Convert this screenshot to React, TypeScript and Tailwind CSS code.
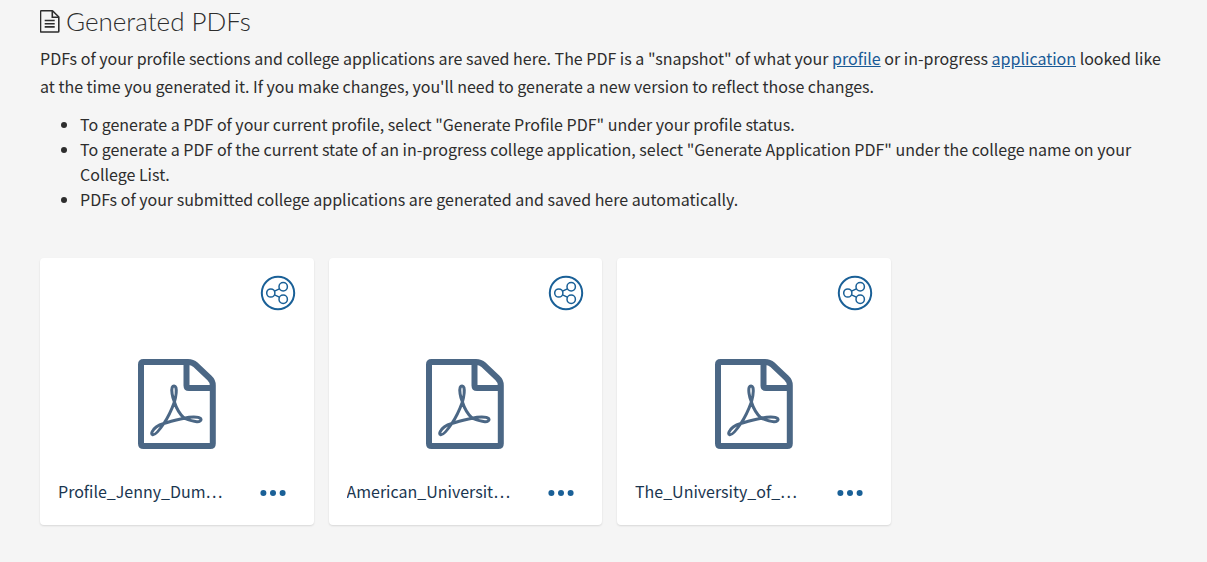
const files = [
  { id: 1, name: 'Profile_Jenny_Dum…' },
  { id: 2, name: 'American_Universit…' },
  { id: 3, name: 'The_University_of_…' },
];

function DocumentIcon() {
  return (
    <svg width="20" height="23" viewBox="0 0 20 23" fill="none" stroke="currentColor" strokeWidth="1.6" aria-hidden="true">
      <path d="M1.3 .8H12.5L18.8 7V21.2Q18.8 22 18 22H1.3Q.5 22 .5 21.2V1.6Q.5 .8 1.3 .8Z" strokeLinejoin="round" />
      <path d="M12.3 1V7.2H18.8M4.7 10.5H14.7M4.7 13.7H14.7M4.7 16.9H14.7" />
    </svg>
  );
}

function ShareIcon() {
  return (
    <svg width="36" height="36" viewBox="0 0 36 36" fill="none" stroke="currentColor" aria-hidden="true">
      <circle cx="18" cy="18" r="16.2" strokeWidth="2" />
      <g strokeWidth="1.5">
        <circle cx="10.8" cy="18" r="4.1" />
        <circle cx="23.2" cy="11.8" r="4.2" />
        <circle cx="23.2" cy="24.2" r="4.2" />
        <path d="M14.5 16.2L19.4 13.8M14.5 19.8L19.4 22.2" />
      </g>
    </svg>
  );
}

function PdfIcon() {
  return (
    <svg width="78" height="90" viewBox="0 0 78 90" fill="none" stroke="currentColor" strokeLinejoin="round" aria-hidden="true">
      <path strokeWidth="6" d="M5.5 3H50Q54.5 3 57.5 5.8L71.5 19Q74.8 22 74.8 26.5V84.5Q74.8 87 72.3 87H5.5Q3 87 3 84.5V5.5Q3 3 5.5 3Z" />
      <path strokeWidth="6" d="M48.5 3V26.5Q48.5 29 51 29H75" />
      <path
        strokeWidth="3"
        d="M36.4 43C34.2 38 33.2 31 34.2 28.3C35 26.4 37.2 26.5 37.9 28.5C38.7 31.5 37.8 38 36.4 43ZM36.4 43C33.5 51 30 58.5 25.8 64.5C21.5 71 17.2 76.5 14.6 75.7C12.4 74.8 14.6 70.8 18.2 68C20.6 66.2 23 65.2 25.8 64.5C33.2 62.2 39.3 60.2 46.2 59.2C52 57.6 60.5 57.2 62.7 59.6C64 61.2 61.6 62.9 58.8 62.7C54.5 62.4 50 60.7 46.2 59.2C41.5 55 38.3 49 36.4 43Z"
      />
    </svg>
  );
}

function MoreIcon() {
  return (
    <svg width="26" height="8" viewBox="0 0 26 8" fill="currentColor" aria-hidden="true">
      <circle cx="3.4" cy="4" r="3" />
      <circle cx="13" cy="4" r="3" />
      <circle cx="22.6" cy="4" r="3" />
    </svg>
  );
}

function FileCard({ name }: { name: string }) {
  return (
    <article className="flex flex-col rounded bg-white px-[18px] pt-[17px] pb-[21px] text-[#1b3650] shadow-[0_1px_2px_rgba(0,0,0,0.12)]">
      <button type="button" aria-label={`Share ${name}`} className="self-end text-[#1a6097]">
        <ShareIcon />
      </button>
      <div className="mt-12 flex justify-center text-[#4b6785]">
        <PdfIcon />
      </div>
      <div className="mt-[29px] flex h-[26px] items-center justify-between pr-[10px]">
        <span className="truncate">{name}</span>
        <button type="button" aria-label={`More options for ${name}`} className="shrink-0 pt-1 text-[#1a6097]">
          <MoreIcon />
        </button>
      </div>
    </article>
  );
}

export default function App() {
  return (
    <main className="min-h-screen bg-[#f5f5f5] pt-[7px] pr-7 pb-9 pl-10 font-['Noto_Sans_CJK_SC',sans-serif] text-base text-[#2d2d2d]">
      <h1 className="flex h-7 items-center gap-[6px] font-['Lato',sans-serif] text-[26px] font-light">
        <DocumentIcon />
        Generated PDFs
      </h1>
      <p className="mt-[9px] pr-2 leading-7">
        PDFs of your profile sections and college applications are saved here. The PDF is a "snapshot" of what your{' '}
        <a href="#profile" className="text-[#1a5a96] underline">profile</a> or in-progress{' '}
        <a href="#application" className="text-[#1a5a96] underline">application</a> looked like at the time you
        generated it. If you make changes, you'll need to generate a new version to reflect those changes.
      </p>
      <ul className="mt-3 list-disc pl-10 leading-[25px]">
        <li>To generate a PDF of your current profile, select "Generate Profile PDF" under your profile status.</li>
        <li>
          To generate a PDF of the current state of an in-progress college application, select "Generate Application
          PDF" under the college name on your College List.
        </li>
        <li>PDFs of your submitted college applications are generated and saved here automatically.</li>
      </ul>
      <section aria-label="Generated files" className="mt-[46px] grid grid-cols-4 gap-[15px]">
        {files.map((file) => (
          <FileCard key={file.id} name={file.name} />
        ))}
      </section>
    </main>
  );
}
